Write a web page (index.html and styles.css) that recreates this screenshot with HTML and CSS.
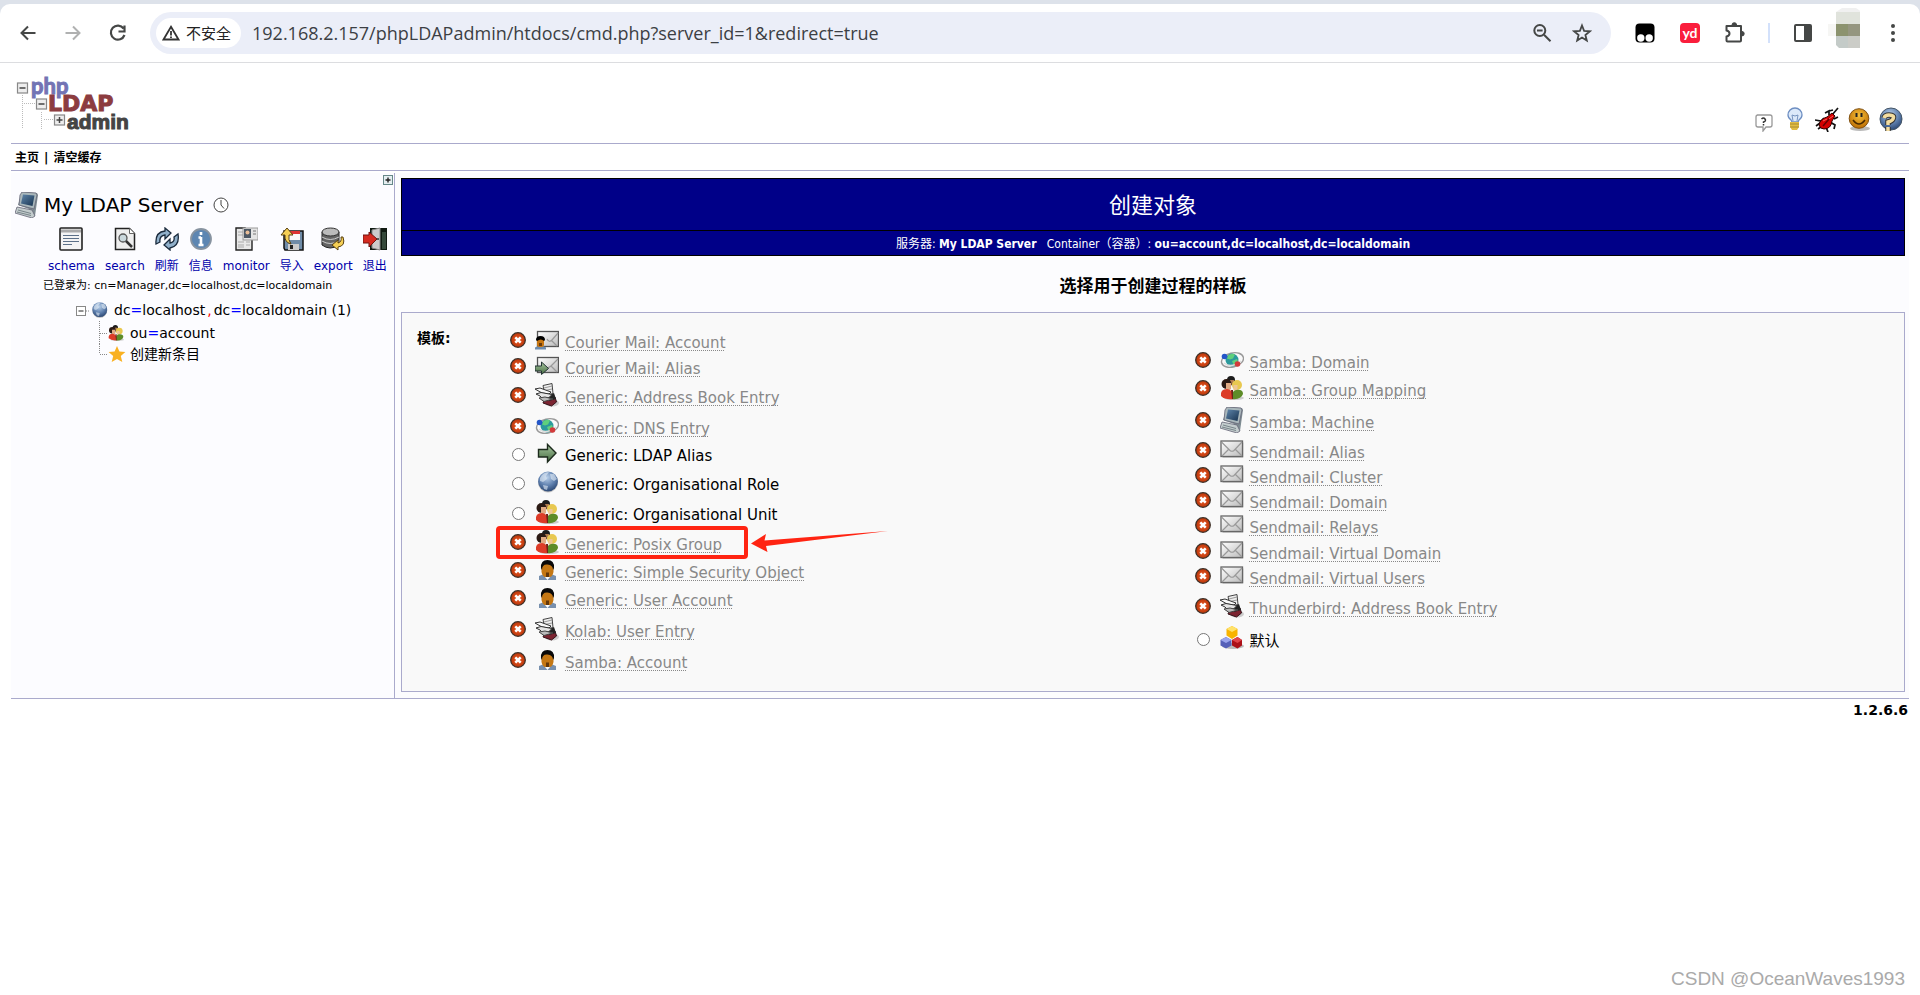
FILE: index.html
```html
<!DOCTYPE html>
<html lang="zh-CN">
<head>
<meta charset="utf-8">
<title>phpLDAPadmin</title>
<link rel="stylesheet" href="styles.css">
</head>
<body>
<svg class="sprite" aria-hidden="true">
  <defs>
    <linearGradient id="g-mail" x1="0" y1="0" x2="1" y2="1"><stop offset="0" stop-color="#fff"/><stop offset="1" stop-color="#bbb"/></linearGradient>
    <radialGradient id="g-globe" cx=".45" cy=".3" r=".75"><stop offset="0" stop-color="#b9d0ea"/><stop offset=".55" stop-color="#5f80ae"/><stop offset="1" stop-color="#24406c"/></radialGradient>
    <linearGradient id="g-green" x1="0" y1="0" x2="0" y2="1"><stop offset="0" stop-color="#a8c8a0"/><stop offset="1" stop-color="#456b40"/></linearGradient>
    <radialGradient id="g-red" cx=".5" cy=".5" r=".5"><stop offset="0" stop-color="#f0602a"/><stop offset="1" stop-color="#b83408"/></radialGradient>
    <linearGradient id="g-scr" x1="0" y1="0" x2="1" y2="1"><stop offset="0" stop-color="#5f86ab"/><stop offset="1" stop-color="#17324f"/></linearGradient>
    <radialGradient id="g-smile" cx=".5" cy=".35" r=".6"><stop offset="0" stop-color="#f8c038"/><stop offset="1" stop-color="#c07408"/></radialGradient>
  </defs>
  <symbol id="deny" viewBox="0 0 16 16"><circle cx="8" cy="8" r="7.3" fill="url(#g-red)" stroke="#3c3028" stroke-width="1.3"/><path d="M5.300 5.300l5.400 5.400M10.700 5.300l-5.400 5.400" stroke="#fff" stroke-width="2.500"/></symbol>
  <symbol id="mail" viewBox="0 0 24 24"><path d="M2.500 19.500h20.500v-15" fill="none" stroke="#ccc"/><rect x="1" y="3" width="21.500" height="15.500" fill="url(#g-mail)" stroke="#666" stroke-width="1.300"/><path d="M1.500 4L10 12.500q2 1.500 4 0l8-8.500M2 18l7-7M22 18l-7-7" fill="none" stroke="#999" stroke-width="1.200"/></symbol>
  <symbol id="mailuser" viewBox="0 0 24 24"><rect x="2.500" y="3.500" width="21" height="15" fill="url(#g-mail)" stroke="#555" stroke-width="1.300"/><path d="M12 11q2 4 5 1l6-7M22 18l-6-6" fill="none" stroke="#999" stroke-width="1.200"/><path d="M0 21.500v-2l4-2h3l4 2v2z" fill="#6d8bad"/><rect x="2" y="9" width="7" height="10" rx="2.500" fill="#c87610"/><path d="M1 12q0-4 4.500-4T10 12l-1 1q-3-3-7 0z" fill="#000"/><path d="M4 15h3v3H4z" fill="#6b3a08"/></symbol>
  <symbol id="mailalias" viewBox="0 0 24 24"><rect x="2.500" y="3.500" width="21" height="15" fill="url(#g-mail)" stroke="#555" stroke-width="1.300"/><path d="M8 10q4 6 8 2l7-7M22 18l-6-6" fill="none" stroke="#999" stroke-width="1.200"/><path d="M0 12h6.500V8l7 6.500-7 6v-3.500H0z" fill="url(#g-green)" stroke="#233" stroke-width="1"/></symbol>
  <symbol id="book" viewBox="0 0 24 24"><ellipse cx="17" cy="20" rx="7" ry="3.500" fill="#ccc"/><path d="M9 17l9-1 2-2 1.500 5-5 4-8.500-3z" fill="#7c2431" stroke="#33141a"/><path d="M13 12l6-2 2 6-7 2z" fill="#222"/><path d="M8 2.500l9-2 1 10-8 2z" fill="#eee" stroke="#444"/><path d="M9 5l8-2M10 7.500l7-1.500" stroke="#999"/><path d="M0 6l5-1 11 4-2 2-7-1z" fill="#f8f8f8" stroke="#333"/><path d="M1 11l5-1.500 11 2-3 3-6 1.500-3-3z" fill="#e4e4e4" stroke="#333"/><path d="M4 15l6-1 8 2-9 2.500z" fill="#bbb" stroke="#444"/></symbol>
  <symbol id="dns" viewBox="0 0 24 24"><ellipse cx="12.500" cy="12" rx="11.200" ry="7" transform="rotate(-14 12.500 12)" fill="none" stroke="#999" stroke-width="1.400"/><circle cx="12" cy="12" r="6.500" fill="#2c9a9c"/><path d="M8 7.500q4-3 7-1l-2 4-3 1-3-1zM12 13l5-2 1 3-4 4z" fill="#5fd07c"/><path d="M4 15q7 6 17-2" fill="none" stroke="#ddd" stroke-width="1.500"/><circle cx="4.500" cy="8.500" r="2.800" fill="#2456c8"/><circle cx="17.500" cy="16" r="2.800" fill="#d23b3b"/></symbol>
  <symbol id="arrow" viewBox="0 0 24 24"><path d="M3.500 8.500h9V3.500l8.500 8.500-8.500 9v-5h-9z" fill="url(#g-green)" stroke="#1c2a1c" stroke-width="1.400"/></symbol>
  <symbol id="globe" viewBox="0 0 24 24"><circle cx="13" cy="12.500" r="10" fill="#c4c4c4"/><circle cx="13" cy="11.500" r="9.900" fill="url(#g-globe)"/><path d="M5 8q3-6 9-6l-3 4 1 3-4 3-3-1zM15 4l4 0 3 5-3 2-3-2zM8 15l5 1-1 4-3-1z" fill="#e2ecf6" opacity=".6"/></symbol>
  <symbol id="group" viewBox="0 0 24 24"><ellipse cx="14" cy="22" rx="10" ry="2" fill="#ccc"/><circle cx="11" cy="4" r="4" fill="#1c1c1c"/><path d="M10 4h4v5h-4z" fill="#b07a50"/><circle cx="6.500" cy="8" r="5" fill="#2b1a14"/><path d="M6 7h5v6q-2 2-5 0z" fill="#e0aa84"/><path d="M1 20q-1-7 6-7 6 0 7 10-9 1-13-3z" fill="#dc3c28"/><circle cx="17" cy="9" r="5" fill="#e8c850"/><path d="M13.500 9h4v5q-2 2-4 0z" fill="#eec694"/><path d="M12 23q-1-8 4-9 7-1 7 4-2 6-11 5z" fill="#5d8c28"/><path d="M11 14h2v9h-1z" fill="#702018"/></symbol>
  <symbol id="user" viewBox="0 0 24 24"><path d="M4 22v-4l5-2h7l5 2v4z" fill="#7890ae"/><path d="M10 19h5l-2.500 3z" fill="#fff"/><path d="M6.500 8q0-4 6-4t6 4v6q-1 5-4 5h-4q-3 0-4-5z" fill="#c47714"/><path d="M6 10Q5.500 2 12.500 2T19 10l-1 2q0-5-5.500-5.500T7 12z" fill="#090909"/><path d="M11 14.500h3V19h-3z" fill="#63370a"/></symbol>
  <symbol id="computer" viewBox="0 0 24 26"><path d="M7 0l15 1 1 2-3 21-4 1-2-8-11-4z" fill="#7e8c92"/><path d="M7 0l14 1 1 2-3 14-15-4 1-10z" fill="#a9b7bb" stroke="#667" stroke-width=".8"/><path d="M8 2.500l11.500 1-2 10.500-11.500-2.500z" fill="url(#g-scr)"/><path d="M2 15l15 3 3 6-3 2L0 21z" fill="#c3cccd" stroke="#667" stroke-width=".8"/><path d="M3 18l13 3.500M2 20l14 3.500" stroke="#78858a"/></symbol>
  <symbol id="cubes" viewBox="0 0 24 24"><ellipse cx="13" cy="20" rx="11" ry="3" fill="#bbb"/><path d="M12 0l5.500 3v6.500L12 13 6.500 9.500V3z" fill="#f8b400"/><path d="M12 0l5.500 3L12 6 6.500 3z" fill="#ffe26a"/><path d="M6 11l5.500 3v5.500L6 22.500.500 19.500V14z" fill="#5560b8"/><path d="M6 11l5.500 3L6 17 .500 14z" fill="#9aa4ec"/><path d="M17.500 11l4.500 3v5.500l-4.500 3-5.500-3V14z" fill="#ac1018"/><path d="M17.500 11l4.500 3-4.500 3-5.500-3z" fill="#e0444a"/></symbol>
</svg>

<header class="browser">
  <div class="tabstrip"></div>
  <div class="toolbar">
    <button class="tool" aria-label="后退"><svg width="20" height="20" viewBox="0 0 20 20" fill="none" stroke="#454746" stroke-width="2"><path d="M17.500 10H4M10 3.500L3.500 10l6.500 6.500"/></svg></button>
    <button class="tool" aria-label="前进"><svg width="20" height="20" viewBox="0 0 20 20" fill="none" stroke="#b0b1b1" stroke-width="2"><path d="M2.500 10H16M10 3.500l6.500 6.500-6.500 6.500"/></svg></button>
    <button class="tool" aria-label="重新加载"><svg width="20" height="20" viewBox="0 0 20 20" fill="none" stroke="#454746" stroke-width="2.200"><path d="M15.600 5.500A7 7 0 1 0 16.500 12M16.500 2.500v6h-6"/></svg></button>
    <div class="omnibox">
      <button class="chip"><svg width="18" height="16" viewBox="0 0 18 16" fill="none" stroke="#333" stroke-width="1.800"><path d="M9 1.800L16.500 14.500h-15zM9 6v4.500M9 11.500v1.600"/></svg>不安全</button>
      <input class="url" type="text" aria-label="地址" value="192.168.2.157/phpLDAPadmin/htdocs/cmd.php?server_id=1&amp;redirect=true">
      <button class="tool" aria-label="缩放"><svg width="20" height="20" viewBox="0 0 20 20" fill="none" stroke="#454746" stroke-width="2"><circle cx="7.800" cy="7.500" r="5.500"/><path d="M12 11.700l6.500 6.500M5 7.500h5.600"/></svg></button>
      <button class="tool" aria-label="收藏"><svg width="20" height="20" viewBox="0 0 20 20" fill="none" stroke="#454746" stroke-width="1.800"><path d="M10 2.500l2.100 5.400 5.700.4-4.400 3.700 1.400 5.600-4.800-3-4.800 3 1.400-5.600-4.400-3.700 5.700-.4z"/></svg></button>
    </div>
    <div class="extensions">
      <button class="tool" aria-label="脚本扩展"><svg width="20" height="20" viewBox="0 0 20 20"><rect x=".5" y=".5" width="19" height="19" rx="4" fill="#000"/><circle cx="5.800" cy="15" r="3.700" fill="#fff"/><circle cx="14.200" cy="15" r="3.700" fill="#fff"/></svg></button>
      <button class="tool yd" aria-label="有道">yd</button>
      <button class="tool" aria-label="扩展程序"><svg width="22" height="22" viewBox="0 0 22 22" fill="none" stroke="#454746" stroke-width="2"><path d="M2.500 4h14.500v14.500q0 1-1 1H3.500q-1 0-1-1v-4q3-.7 3-3t-3-3z" stroke-linejoin="round"/><path d="M8 3a2.300 2.300 0 0 1 4.600 0zM18 9.500a2.200 2.200 0 0 1 0 4.400z" fill="#454746" stroke-width="1"/></svg></button>
      <span class="divider"></span>
      <button class="tool" aria-label="侧边栏"><svg width="20" height="20" viewBox="0 0 20 20"><path d="M3 1h14q2 0 2 2v14q0 2-2 2H3q-2 0-2-2V3q0-2 2-2zm0 2v14h8V3z" fill="#454746" fill-rule="evenodd"/></svg></button>
      <button class="tool profile" aria-label="个人资料"><svg width="32" height="40" viewBox="0 0 32 40"><path d="M14 0h14l6 4H8z" fill="#f0f0f0"/><path d="M0 16h8v12H0z" fill="#f6f6f4"/><path d="M8 4h24v12H8z" fill="#e0e3dc"/><path d="M8 16h12v12H8z" fill="#8c936f"/><path d="M20 16h12v12H20z" fill="#959680"/><path d="M8 28h12v12h-9l-3-3z" fill="#c4cbc8"/><path d="M20 28h12v12H20z" fill="#cbccc7"/></svg></button>
      <button class="tool" aria-label="菜单"><svg width="20" height="20" viewBox="0 0 20 20" fill="#454746"><circle cx="10" cy="3" r="2"/><circle cx="10" cy="10" r="2"/><circle cx="10" cy="17" r="2"/></svg></button>
    </div>
  </div>
</header>

<div class="page">
  <div class="masthead">
    <a href="#" aria-label="phpLDAPadmin"><svg class="logo" width="120" height="58" viewBox="0 0 120 58">
      <path d="M6.500 21v34M25.500 38v17M8 29.500h12M28 45.500h11" stroke="#bbb" stroke-dasharray="1 1" fill="none"/>
      <g fill="#eee" stroke="#888" stroke-width="1.200"><rect x="1.500" y="9" width="10" height="10"/><rect x="20.500" y="25" width="10" height="10"/><rect x="38.500" y="41" width="10" height="10"/></g>
      <path d="M3.500 14h6M22.500 30h6M40.500 46h6M43.500 43v6" stroke="#444" stroke-width="1.500"/>
      <text x="15" y="20" class="logo-php">php</text>
      <text x="32" y="37" class="logo-ldap">LDAP</text>
      <text x="51" y="55" class="logo-admin">admin</text>
    </svg></a>
    <div class="quick">
      <a href="#" aria-label="提示"><svg width="24" height="25" viewBox="0 0 24 25"><path d="M6 8h13q2 0 2 2v8q0 2-2 2h-4l-3 4v-4H7q-2 0-2-2v-8q0-2 2-2z" fill="#fff" stroke="#999" stroke-width="1.300"/><path d="M10.500 12q2-2 3.500 0t-1.500 3v1M12.500 17v1.500" fill="none" stroke="#333" stroke-width="1.500"/></svg></a>
      <a href="#" aria-label="建议"><svg width="24" height="25" viewBox="0 0 24 25"><path d="M12 1a7 7 0 0 0-7 7q0 3 3 5l1 2h6l1-2q3-2 3-5a7 7 0 0 0-7-7z" fill="#dce9fa" stroke="#6d8ec2" stroke-width="1.300"/><path d="M10 14L9 8l3 1 3-1-1 6" fill="none" stroke="#7794c0"/><path d="M7 15h9v5l-2 3h-5l-2-3z" fill="#e2bd42"/><path d="M7 17h9M7 20h9" stroke="#a88a30"/></svg></a>
      <a href="#" aria-label="报告错误"><svg width="24" height="25" viewBox="0 0 24 25"><path d="M0 13l6 1 3-3M1 19l4-3 1 4-3 2M11 20l2 5M15 15l5 3-1 4M14 8V4l-4 2M17 8l6-7M14 4l4-1M19 12l4-2" fill="none" stroke="#111" stroke-width="1.700"/><path d="M4 18q1-6 8-8l5-4 3 3-3 5q-1 8-8 8-4 0-5-4z" fill="#d40000" stroke="#300"/><path d="M8 19l7-8" stroke="#600" stroke-width="1.500"/><path d="M8 14l4-2M14 12l4-3" stroke="#ff6060"/></svg></a>
      <a href="#" aria-label="捐赠"><svg width="24" height="25" viewBox="0 0 24 25"><ellipse cx="13" cy="21.500" rx="10" ry="2.500" fill="#bbb"/><circle cx="12" cy="11.500" r="9.800" fill="url(#g-smile)" stroke="#805010"/><path d="M9.500 6v4M14.500 6v4" stroke="#222" stroke-width="2"/><path d="M6 13q6 8 12 0" fill="none" stroke="#4a2a00" stroke-width="1.500"/></svg></a>
      <a href="#" aria-label="帮助"><svg width="24" height="25" viewBox="0 0 24 25"><circle cx="12" cy="12" r="11" fill="url(#g-globe)" stroke="#456"/><path d="M5 11q1-3 5-3 6 0 4 4-1 2-5 3V18M9 20v4" fill="none" stroke="#333" stroke-width="5.500"/><path d="M5 11q1-3 5-3 6 0 4 4-1 2-5 3V18M9 20v4" fill="none" stroke="#f3dda0" stroke-width="3.500"/></svg></a>
    </div>
  </div>
  <nav class="menu"><a href="#">主页</a><span>|</span><a href="#">清空缓存</a></nav>

  <div class="columns">
    <aside class="sidebar">
      <button class="expand" aria-label="展开"><svg width="10" height="10" viewBox="0 0 10 10"><rect x=".5" y=".5" width="9" height="9" fill="#e4eef0" stroke="#688"/><path d="M2.500 5h5M5 2.500v5" stroke="#222" stroke-width="1.400"/></svg></button>
      <h2 class="server"><svg width="24" height="26"><use href="#computer"/></svg>My LDAP Server<svg class="clock" width="16" height="16" viewBox="0 0 16 16" fill="#fff" stroke="#444"><circle cx="8" cy="8" r="7"/><path d="M8 3v5l3 3.500" fill="none"/></svg></h2>
      <div class="actions">
        <a href="#"><svg width="24" height="24" viewBox="0 0 24 24"><rect x="1" y="1" width="22" height="22" rx="1" fill="#f4f4f4" stroke="#222" stroke-width="1.600"/><path d="M2 4h20" stroke="#aaa" stroke-width="3"/><path d="M4 8.500h16M4 11.500h16M4 14.500h16M4 17.500h9" stroke="#5c7088" stroke-width="1.200"/></svg>schema</a>
        <a href="#"><svg width="24" height="24" viewBox="0 0 24 24"><path d="M2.500 1.500h14l5 5v16h-19z" fill="#eee" stroke="#222" stroke-width="1.500"/><path d="M16.500 1.500v5h5" fill="#fff" stroke="#666"/><circle cx="10" cy="11" r="4" fill="#cad8dc" stroke="#555" stroke-width="1.300"/><path d="M13 14l6 6" stroke="#333" stroke-width="2.500"/></svg>search</a>
        <a href="#"><svg width="24" height="24" viewBox="0 0 24 24" fill="#90afc9" stroke="#1a2a3c" stroke-width="1.300"><path d="M1 17Q0 5 10 4V1l6 5-6 6V8q-6 1-5 7z"/><path d="M23 7q2 12-8 14v2l-6-5 6-6v4q5-1 4-6z"/></svg>刷新</a>
        <a href="#"><svg width="24" height="24" viewBox="0 0 24 24"><circle cx="12" cy="12" r="10" fill="#5d86b2" stroke="#8793a0" stroke-width="1.800"/><path d="M12 10v8M9.500 10.500H12M9.500 18h5M12 5v3" stroke="#fff" stroke-width="2.600"/></svg>信息</a>
        <a href="#"><svg width="24" height="24" viewBox="0 0 24 24"><path d="M2 1h9v11h7v11H2z" fill="#e8e8e8" stroke="#222" stroke-width="1.400"/><path d="M4 5h5M4 8h5M4 15h6M4 18h6M4 20h6M12 15h4M12 18h4" stroke="#aaa"/><rect x="9" y="1" width="15" height="12" fill="#e4e4e4" stroke="#999"/><rect x="10" y="2" width="7" height="9" fill="#4d5864"/><circle cx="13.500" cy="5.500" r="2" fill="#e9bd97"/><path d="M19 4h3M19 7h3" stroke="#777"/></svg>monitor</a>
        <a href="#"><svg width="24" height="24" viewBox="0 0 24 24"><path d="M4 4h19v19H5l-1-2z" fill="#708ca8" stroke="#111" stroke-width="1.500"/><path d="M8 4h12v9H8z" fill="#f8f8f8"/><path d="M8 4h12v3H8z" fill="#d33"/><path d="M8 17h11v6H8z" fill="#ccc"/><path d="M10 18h3v4h-3z" fill="#222"/><path d="M11 17Q4 15 5 8H1l6-7 6 7H9q-1 5 2 9z" fill="#f5cf55" stroke="#584010"/></svg>导入</a>
        <a href="#"><svg width="24" height="24" viewBox="0 0 24 24"><path d="M1 5v13q8 6 17 0V5z" fill="#646464" stroke="#222"/><ellipse cx="9.500" cy="5" rx="8.500" ry="4" fill="#bbb" stroke="#333"/><path d="M1 10q8 5 17 0M1 14q8 5 17 0" fill="none" stroke="#ccc"/><path d="M22 10q3 9-5 10v3l-6-5 6-5v3q4-1 3-6z" fill="#f5cf55" stroke="#584010"/></svg>export</a>
        <a href="#"><svg width="24" height="24" viewBox="0 0 24 24"><path d="M7 1h17v22H7z" fill="#101a12"/><path d="M9 3l8-2v22l-8-2z" fill="#ccc" stroke="#888"/><path d="M19 5h4v17h-4z" fill="#34483a"/><circle cx="15" cy="12" r="1" fill="#333"/><path d="M0 8h6V5l8 7-8 8v-4H0z" fill="#d42a20" stroke="#701410"/></svg>退出</a>
      </div>
      <p class="login">已登录为: cn=Manager,dc=localhost,dc=localdomain</p>
      <ul class="tree">
        <li class="root"><svg width="14" height="20" viewBox="0 0 14 20"><rect x=".5" y="6.500" width="9" height="9" fill="#fff" stroke="#888"/><path d="M2.500 11h5" stroke="#222"/><path d="M10 11h4" stroke="#888" stroke-dasharray="1 1"/></svg><svg width="18" height="18"><use href="#globe"/></svg><a href="#">dc<b>=</b>localhost<i>,</i>dc<b>=</b>localdomain (1)</a></li>
        <li><svg width="9" height="24" viewBox="0 0 9 24" stroke="#888" stroke-dasharray="1 1"><path d="M.5 0v24M1 12.500h8"/></svg><svg width="16" height="16"><use href="#group"/></svg><a href="#">ou<b>=</b>account</a></li>
        <li class="last"><svg width="9" height="20" viewBox="0 0 9 20" stroke="#888" stroke-dasharray="1 1"><path d="M.5 0v10M1 10.500h8"/></svg><svg width="18" height="18" viewBox="0 0 18 18"><path d="M9 1l2.400 5.600 6 .5-4.600 4 1.500 6L9 13.900l-5.300 3.200 1.500-6-4.600-4 6-.5z" fill="#f9b122"/></svg><a href="#">创建新条目</a></li>
      </ul>
    </aside>

    <main class="main">
      <h1 class="title">创建对象</h1>
      <p class="subtitle">服务器: <strong>My LDAP Server</strong> &nbsp; Container（容器）: <strong>ou=account,dc=localhost,dc=localdomain</strong></p>
      <h3 class="prompt">选择用于创建过程的样板</h3>
      <form class="panel">
        <div class="panel-label">模板:</div>
        <ul class="list">
          <li class="h26"><svg class="deny"><use href="#deny"/></svg><svg class="pic"><use href="#mailuser"/></svg><abbr>Courier Mail: Account</abbr></li>
          <li class="h26"><svg class="deny"><use href="#deny"/></svg><svg class="pic"><use href="#mailalias"/></svg><abbr>Courier Mail: Alias</abbr></li>
          <li class="h29"><svg class="deny"><use href="#deny"/></svg><svg class="pic"><use href="#book"/></svg><abbr>Generic: Address Book Entry</abbr></li>
          <li class="h31"><svg class="deny"><use href="#deny"/></svg><svg class="pic"><use href="#dns"/></svg><abbr>Generic: DNS Entry</abbr></li>
          <li class="h27"><input type="radio" name="template" id="t-alias"><svg class="pic"><use href="#arrow"/></svg><label for="t-alias">Generic: LDAP Alias</label></li>
          <li class="h29"><input type="radio" name="template" id="t-role"><svg class="pic"><use href="#globe"/></svg><label for="t-role">Generic: Organisational Role</label></li>
          <li class="h30"><input type="radio" name="template" id="t-unit"><svg class="pic"><use href="#group"/></svg><label for="t-unit">Generic: Organisational Unit</label></li>
          <li class="h30 marked"><svg class="deny"><use href="#deny"/></svg><svg class="pic"><use href="#group"/></svg><abbr>Generic: Posix Group</abbr>
            <span class="frame"></span>
            <svg class="pointer" width="138" height="24" viewBox="0 0 138 24"><path d="M0 12.500L15 3l-1.500 6.500L137 0 15 15l1.500 6z" fill="#ff2412"/></svg></li>
          <li class="h28"><svg class="deny"><use href="#deny"/></svg><svg class="pic"><use href="#user"/></svg><abbr>Generic: Simple Security Object</abbr></li>
          <li class="h28"><svg class="deny"><use href="#deny"/></svg><svg class="pic"><use href="#user"/></svg><abbr>Generic: User Account</abbr></li>
          <li class="h31"><svg class="deny"><use href="#deny"/></svg><svg class="pic"><use href="#book"/></svg><abbr>Kolab: User Entry</abbr></li>
          <li class="h31"><svg class="deny"><use href="#deny"/></svg><svg class="pic"><use href="#user"/></svg><abbr>Samba: Account</abbr></li>
        </ul>
        <ul class="list second">
          <li class="h28"><svg class="deny"><use href="#deny"/></svg><svg class="pic"><use href="#dns"/></svg><abbr>Samba: Domain</abbr></li>
          <li class="h28"><svg class="deny"><use href="#deny"/></svg><svg class="pic"><use href="#group"/></svg><abbr>Samba: Group Mapping</abbr></li>
          <li class="h32"><svg class="deny"><use href="#deny"/></svg><svg class="pic tall"><use href="#computer"/></svg><abbr>Samba: Machine</abbr></li>
          <li class="h30"><svg class="deny"><use href="#deny"/></svg><svg class="pic"><use href="#mail"/></svg><abbr>Sendmail: Alias</abbr></li>
          <li class="h25"><svg class="deny"><use href="#deny"/></svg><svg class="pic"><use href="#mail"/></svg><abbr>Sendmail: Cluster</abbr></li>
          <li class="h25"><svg class="deny"><use href="#deny"/></svg><svg class="pic"><use href="#mail"/></svg><abbr>Sendmail: Domain</abbr></li>
          <li class="h25"><svg class="deny"><use href="#deny"/></svg><svg class="pic"><use href="#mail"/></svg><abbr>Sendmail: Relays</abbr></li>
          <li class="h26"><svg class="deny"><use href="#deny"/></svg><svg class="pic"><use href="#mail"/></svg><abbr>Sendmail: Virtual Domain</abbr></li>
          <li class="h25"><svg class="deny"><use href="#deny"/></svg><svg class="pic"><use href="#mail"/></svg><abbr>Sendmail: Virtual Users</abbr></li>
          <li class="h30"><svg class="deny"><use href="#deny"/></svg><svg class="pic"><use href="#book"/></svg><abbr>Thunderbird: Address Book Entry</abbr></li>
          <li class="h32"><input type="radio" name="template" id="t-default"><svg class="pic"><use href="#cubes"/></svg><label for="t-default">默认</label></li>
        </ul>
      </form>
    </main>
  </div>
  <footer class="version">1.2.6.6</footer>
</div>
<div class="watermark">CSDN @OceanWaves1993</div>
</body>
</html>
```
FILE: styles.css
```css
* { box-sizing: border-box; }
body { margin: 0; min-height: 100vh; display: flex; flex-direction: column; background: #fff; color: #000; font: 14px/20px "DejaVu Sans", "Noto Sans CJK SC", sans-serif; }
h1, h2, h3, p, ul { margin: 0; padding: 0; font-weight: normal; }
ul { list-style: none; }
a { color: inherit; text-decoration: none; }
svg { flex: none; display: block; }
button { border: 0; padding: 0; background: none; font: inherit; color: inherit; }
.sprite { position: absolute; width: 0; height: 0; }

/* browser bar */
.browser { background: #dde2ea; border-bottom: 1px solid #dcdde0; }
.tabstrip { height: 4px; }
.toolbar { display: flex; align-items: center; height: 58px; padding: 0 17px 0 18px; background: #fff; border-radius: 10px 10px 0 0; }
.tool { display: flex; align-items: center; justify-content: center; flex: none; width: 20px; height: 20px; margin-right: 25px; }
.omnibox { display: flex; align-items: center; flex: 1; height: 42px; padding: 0 19px 0 6px; margin-left: -3px; background: #ebeef8; border-radius: 21px; }
.omnibox .tool { margin: 0 0 0 20px; }
.chip { display: flex; align-items: center; gap: 6px; height: 30px; padding: 0 10px 0 6px; border-radius: 15px; background: #fff; color: #222; font: 15px/20px "Noto Sans CJK SC", sans-serif; }
.url { flex: 1; min-width: 0; margin-left: 11px; padding: 0; border: 0; background: none; color: #3c3f44; font: 18px/24px "Open Sans", "Noto Sans", sans-serif; outline: 0; }
.extensions { display: flex; align-items: center; padding-left: 24px; }
.extensions .tool:last-child { margin-right: 0; }
.yd { border-radius: 4px; background: #fa1e3c; color: #fff; font: bold 14px/18px "Lato", sans-serif; }
.profile { align-items: flex-end; height: 50px; padding-right: 8px; padding-bottom: 10px; }
.divider { width: 2px; height: 20px; margin: 0 23px 0 -2px; background: #d3e1fb; }

/* application header */
.page { padding: 0 11px; }
.masthead { display: flex; align-items: flex-end; justify-content: space-between; height: 81px; padding: 0 6px 11px 5px; border-bottom: 1px solid #aac; }
.logo { overflow: visible; }
.logo-php { font: bold 22px "Lato", sans-serif; fill: #7374b4; stroke: #7374b4; }
.logo-ldap { font: bold 22px "DejaVu Sans", sans-serif; fill: #8c3c40; stroke: #8c3c40; }
.logo-admin { font: bold 21px "Liberation Sans", sans-serif; fill: #444; stroke: #444; }
.quick { display: flex; gap: 8px; }
.menu { display: flex; gap: 5px; height: 27px; padding: 5px 4px; border-bottom: 1px solid #aac; font-size: 12px; font-weight: bold; line-height: 18px; }

.columns { display: flex; padding-top: 2px; border-bottom: 1px solid #aac; }
.sidebar { position: relative; flex: none; width: 384px; padding: 18px 0 0 4px; background: #fcfcff; border-right: 1px solid #aac; }
.expand { position: absolute; top: 2px; right: 1px; }
.server { display: flex; align-items: center; gap: 5px; height: 28px; font-size: 20px; line-height: 28px; }
.clock { margin-left: 5px; }
.actions { display: flex; gap: 10px; padding: 8px 0 0 33px; color: #00a; font-size: 12px; line-height: 18px; }
.actions a { display: flex; flex-direction: column; align-items: center; gap: 6px; }
.login { padding: 1px 0 0 28px; font-size: 11px; line-height: 20px; }
.tree { padding: 2px 0 0 61px; }
.tree li { display: flex; align-items: center; height: 22px; padding-left: 23px; }
.tree .root { height: 24px; padding-left: 0; }
.tree a { padding-left: 6px; }
.tree .last { height: 20px; }
.tree .last a { padding-left: 4px; }
.tree b, .tree i { font-weight: normal; font-style: normal; color: #00f; }
.tree i { padding: 0 2px; color: #f00; }

/* template chooser */
.main { flex: 1; min-width: 0; padding: 5px 4px 6px 6px; background: #fcfcfe; }
.title { height: 53px; border: 1px solid #000; background: #008; color: #fff; text-align: center; font-size: 22px; line-height: 54px; }
.subtitle { height: 25px; border: 1px solid #000; border-top: 0; background: #008; color: #fff; text-align: center; font: 12px/26px "DejaVu Sans Condensed", "Noto Sans CJK SC", sans-serif; }
.prompt { height: 56px; padding-top: 2px; text-align: center; font-size: 17px; font-weight: bold; line-height: 56px; }
.panel { display: grid; grid-template-columns: 93px 1fr 1fr; padding: 14px 25px 18px 15px; border: 1px solid #aac; background: #f9f9f9; font-size: 15px; }
.panel-label { font-size: 14px; font-weight: bold; line-height: 22px; }
.list li { display: flex; align-items: flex-end; }
.second { padding-top: 18px; }
.h25 { height: 25px; }
.h26 { height: 26px; }
.h27 { height: 27px; }
.h28 { height: 28px; }
.h29 { height: 29px; }
.h30 { height: 30px; }
.h31 { height: 31px; }
.h32 { height: 32px; }
.deny { width: 16px; height: 16px; margin: 0 9px 5px 0; }
.list input { flex: none; width: 13px; height: 13px; margin: 0 10px 5px 2px; }
.pic { width: 24px; height: 24px; margin: 0 6px 1px 0; }
.pic.tall { height: 26px; margin-bottom: 0; }
.list abbr { color: #888; text-decoration: underline dotted 1px; text-underline-offset: 2px; text-decoration-skip-ink: none; }
.marked { position: relative; }
.frame { position: absolute; left: -14px; top: 1px; width: 252px; height: 33px; border: 4px solid #ff2412; border-radius: 4px; }
.pointer { position: absolute; left: 241px; top: 6px; }
.version { padding: 1px 1px 0 0; text-align: right; font-size: 14px; font-weight: bold; }
.watermark { margin-top: auto; padding: 0 15px 4px; text-align: right; color: #aaa; font: 19px/24px "Liberation Sans", sans-serif; }
```
